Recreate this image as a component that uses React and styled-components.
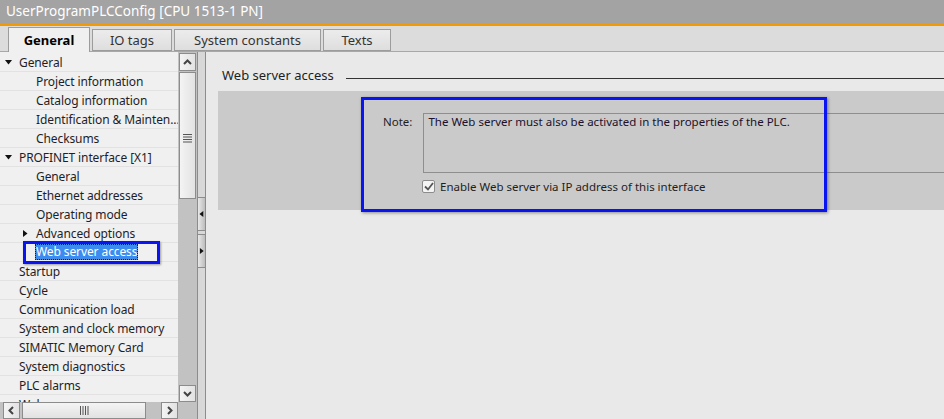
import React from 'react'
import styled, { createGlobalStyle } from 'styled-components'

const Global = createGlobalStyle`
    html, body {
        margin: 0;
        padding: 0;
        width: 944px;
        height: 419px;
        overflow: hidden;
        background: #e8e8e8;
        font-family: "Noto Sans", "Open Sans", sans-serif;
    }
`

const Window = styled.div`
    width: 944px;
    height: 419px;
    display: flex;
    flex-direction: column;
    position: relative;
    overflow: hidden;
`

const TitleBar = styled.div`
    height: 23px;
    flex-shrink: 0;
    background: #a3a3a3;
    color: #ffffff;
    font-size: 13.5px;
    line-height: 23px;
    padding-left: 6px;
    border-bottom: 3px solid #f39a00;
    white-space: nowrap;
`

const TabStrip = styled.div`
    height: 25px;
    flex-shrink: 0;
    background: #dcdcdc;
    display: flex;
    align-items: flex-end;
    padding-left: 8px;
    gap: 2px;
    border-bottom: 1px solid #a8a8a8;
`

const Tab = styled.div`
    box-sizing: border-box;
    width: ${(p) => p.w}px;
    height: ${(p) => (p.active ? 25 : 22)}px;
    margin-bottom: ${(p) => (p.active ? -1 : 0)}px;
    border: 1px solid #9c9c9c;
    border-bottom: ${(p) => (p.active ? 'none' : '1px solid #9c9c9c')};
    background: ${(p) => (p.active ? '#f0f0f0' : 'linear-gradient(#ececec, #dedede)')};
    font-size: 13px;
    font-weight: ${(p) => (p.active ? 700 : 400)};
    color: ${(p) => (p.active ? '#000' : '#333')};
    text-align: center;
    line-height: ${(p) => (p.active ? 24 : 20)}px;
`

const Body = styled.div`
    flex: 1;
    display: flex;
    min-height: 0;
`

const LeftPane = styled.div`
    width: 197px;
    display: grid;
    grid-template-columns: 178px 19px;
    grid-template-rows: 1fr 17px;
    background: #c4c4c4;
`

const Tree = styled.div`
    background: #f0f0f0;
    padding-top: 1px;
    overflow: hidden;
`

const Row = styled.div`
    height: 19px;
    box-sizing: border-box;
    border-bottom: 1px solid #e2e2e2;
    display: flex;
    align-items: center;
    padding-left: ${(p) => (p.level ? 22 : 5)}px;
    font-size: 12px;
    color: #1e1e28;
    white-space: nowrap;
    position: relative;
`

const Arrow = styled.span`
    width: 13px;
    flex-shrink: 0;
    display: flex;
    align-items: center;
`

const Label = styled.span`
    padding: 0 1px;
    letter-spacing: -0.1px;
    ${(p) =>
        p.selected &&
        `
        background: #3c8cf0;
        color: #fff;
        outline: 1px dotted #1a1a1a;
        outline-offset: -1px;
        line-height: 16px;
    `}
`

const Highlight = styled.div`
    position: absolute;
    left: 23px;
    top: -2px;
    width: 131px;
    height: 17px;
    border: 3px solid #0a14f0;
    box-shadow: 1px 1px 2px rgba(0, 0, 0, 0.35);
    pointer-events: none;
`

const VScroll = styled.div`
    display: flex;
    flex-direction: column;
    padding: 1px 1px 0 1px;
    gap: 1px;
    background: #c2c2c2;
`

const ScrollBtn = styled.div`
    box-sizing: border-box;
    width: ${(p) => p.w || 17}px;
    height: ${(p) => p.h || 17}px;
    flex-shrink: 0;
    border: 1px solid #8c8c8c;
    background: linear-gradient(90deg, #f4f4f4, #e2e2e2);
    display: flex;
    align-items: center;
    justify-content: center;
`

const VThumb = styled(ScrollBtn)`
    height: 127px;
    align-items: flex-end;
    padding-bottom: 55px;
`

const Spacer = styled.div`
    flex: 1;
`

const HScroll = styled.div`
    display: flex;
    align-items: center;
    padding-left: 3px;
    gap: 2px;
    background: #c2c2c2;
`

const HThumb = styled(ScrollBtn)`
    width: 124px;
    background: linear-gradient(#f4f4f4, #e2e2e2);
`

const Corner = styled.div`
    background: #c2c2c2;
`

const Splitter = styled.div`
    width: 9px;
    box-sizing: border-box;
    border-left: 1px solid #8c8c8c;
    border-right: 1px solid #8c8c8c;
    background: #d8d8d8;
    display: flex;
    flex-direction: column;
    padding-top: 145px;
    gap: 3px;
`

const SplitBtn = styled.div`
    height: 32px;
    border-top: 1px solid #8c8c8c;
    border-bottom: 1px solid #8c8c8c;
    background: linear-gradient(90deg, #e8e8e8, #bdbdbd);
    display: flex;
    align-items: center;
    justify-content: center;
`

const RightPane = styled.div`
    flex: 1;
    background: #e9e9e9;
    padding: 14px 0 0 12px;
    display: flex;
    flex-direction: column;
    position: relative;
`

const SectionHeader = styled.div`
    display: flex;
    align-items: center;
    gap: 12px;
    height: 18px;
    padding-left: 4px;
    font-size: 13px;
    color: #1e1e1e;
    white-space: nowrap;
    &::after {
        content: '';
        flex: 1;
        height: 1px;
        background: #333;
        margin-top: 6px;
    }
`

const Section = styled.div`
    margin-top: 7px;
    height: 119px;
    background: #cacaca;
    padding: 22px 0 0 165px;
    box-sizing: border-box;
`

const NoteRow = styled.div`
    display: flex;
    align-items: flex-start;
    gap: 11px;
    font-size: 11.5px;
    color: #1e1e1e;
`

const NoteLabel = styled.span`
    margin-top: 1px;
`

const NoteBox = styled.div`
    flex: 1;
    height: 60px;
    box-sizing: border-box;
    border: 1px solid #8e8e8e;
    border-right: none;
    padding: 0 4px;
    color: #20102a;
`

const CheckRow = styled.label`
    display: flex;
    align-items: center;
    gap: 5px;
    margin: 6px 0 0 39px;
    font-size: 11.5px;
    color: #1e1e1e;
`

const Check = styled.span`
    width: 13px;
    height: 13px;
    box-sizing: border-box;
    border: 1px solid #8c8c8c;
    border-radius: 2px;
    background: #f4f4f4;
    display: flex;
    align-items: center;
    justify-content: center;
`

const Annotation = styled.div`
    position: absolute;
    left: 155px;
    top: 45px;
    width: 460px;
    height: 109px;
    border: 3px solid #0a14f0;
    box-shadow: 1px 1px 3px rgba(0, 0, 0, 0.4);
    pointer-events: none;
`

const Tri = ({ dir, size = 7, color = '#111' }) => {
    const pts = {
        down: '0,1 7,1 3.5,5.5',
        right: '1,0 5.5,3.5 1,7',
        left: '5,0 0.5,3.5 5,7',
    }[dir]
    return (
        <svg width={size} height={size} viewBox="0 0 7 7">
            <polygon points={pts} fill={color} />
        </svg>
    )
}

const Chevron = ({ dir }) => {
    const d = {
        up: 'M2 7 L5.5 3.5 L9 7',
        down: 'M2 4 L5.5 7.5 L9 4',
        left: 'M7 2 L3.5 5.5 L7 9',
        right: 'M4 2 L7.5 5.5 L4 9',
    }[dir]
    return (
        <svg width="11" height="11" viewBox="0 0 11 11">
            <path d={d} stroke="#444" strokeWidth="2" fill="none" />
        </svg>
    )
}

const Grip = ({ vertical }) => (
    <svg width="9" height="9" viewBox="0 0 9 9">
        {[1, 3.5, 6, 8.5].map((v) =>
            vertical ? (
                <line key={v} x1="0" y1={v - 0.5} x2="9" y2={v - 0.5} stroke="#555" />
            ) : (
                <line key={v} x1={v - 0.5} y1="0" x2={v - 0.5} y2="9" stroke="#555" />
            )
        )}
    </svg>
)

const items = [
    { t: 'General', level: 0, arrow: 'down' },
    { t: 'Project information', level: 1 },
    { t: 'Catalog information', level: 1 },
    { t: 'Identification & Mainten...', level: 1 },
    { t: 'Checksums', level: 1 },
    { t: 'PROFINET interface [X1]', level: 0, arrow: 'down' },
    { t: 'General', level: 1 },
    { t: 'Ethernet addresses', level: 1 },
    { t: 'Operating mode', level: 1 },
    { t: 'Advanced options', level: 1, arrow: 'right' },
    { t: 'Web server access', level: 1, selected: true },
    { t: 'Startup', level: 0 },
    { t: 'Cycle', level: 0 },
    { t: 'Communication load', level: 0 },
    { t: 'System and clock memory', level: 0 },
    { t: 'SIMATIC Memory Card', level: 0 },
    { t: 'System diagnostics', level: 0 },
    { t: 'PLC alarms', level: 0 },
    { t: 'Web server', level: 0 },
]

const tabs = [
    { t: 'General', w: 82, active: true },
    { t: 'IO tags', w: 80 },
    { t: 'System constants', w: 147 },
    { t: 'Texts', w: 68 },
]

export default function App() {
    return (
        <>
            <Global />
            <Window>
                <TitleBar>UserProgramPLCConfig [CPU 1513-1 PN]</TitleBar>
                <TabStrip>
                    {tabs.map((tab) => (
                        <Tab key={tab.t} w={tab.w} active={tab.active}>
                            {tab.t}
                        </Tab>
                    ))}
                </TabStrip>
                <Body>
                    <LeftPane>
                        <Tree>
                            {items.map((it, i) => (
                                <Row key={i} level={it.level}>
                                    <Arrow>{it.arrow && <Tri dir={it.arrow} />}</Arrow>
                                    <Label selected={it.selected}>{it.t}</Label>
                                    {it.selected && <Highlight />}
                                </Row>
                            ))}
                        </Tree>
                        <VScroll>
                            <ScrollBtn h={18}>
                                <Chevron dir="up" />
                            </ScrollBtn>
                            <VThumb>
                                <Grip vertical />
                            </VThumb>
                            <Spacer />
                            <ScrollBtn h={17}>
                                <Chevron dir="down" />
                            </ScrollBtn>
                        </VScroll>
                        <HScroll>
                            <ScrollBtn w={17}>
                                <Chevron dir="left" />
                            </ScrollBtn>
                            <HThumb>
                                <Grip />
                            </HThumb>
                            <Spacer />
                            <ScrollBtn w={17}>
                                <Chevron dir="right" />
                            </ScrollBtn>
                        </HScroll>
                        <Corner />
                    </LeftPane>
                    <Splitter>
                        <SplitBtn>
                            <Tri dir="left" size={6} />
                        </SplitBtn>
                        <SplitBtn>
                            <Tri dir="right" size={6} />
                        </SplitBtn>
                    </Splitter>
                    <RightPane>
                        <SectionHeader>Web server access</SectionHeader>
                        <Section>
                            <NoteRow>
                                <NoteLabel>Note:</NoteLabel>
                                <NoteBox>
                                    The Web server must also be activated in the properties of the PLC.
                                </NoteBox>
                            </NoteRow>
                            <CheckRow>
                                <Check>
                                    <svg width="10" height="9" viewBox="0 0 10 9">
                                        <path d="M1 4.5 L4 7.5 L9 1" stroke="#555" strokeWidth="1.8" fill="none" />
                                    </svg>
                                </Check>
                                Enable Web server via IP address of this interface
                            </CheckRow>
                        </Section>
                        <Annotation />
                    </RightPane>
                </Body>
            </Window>
        </>
    )
}
